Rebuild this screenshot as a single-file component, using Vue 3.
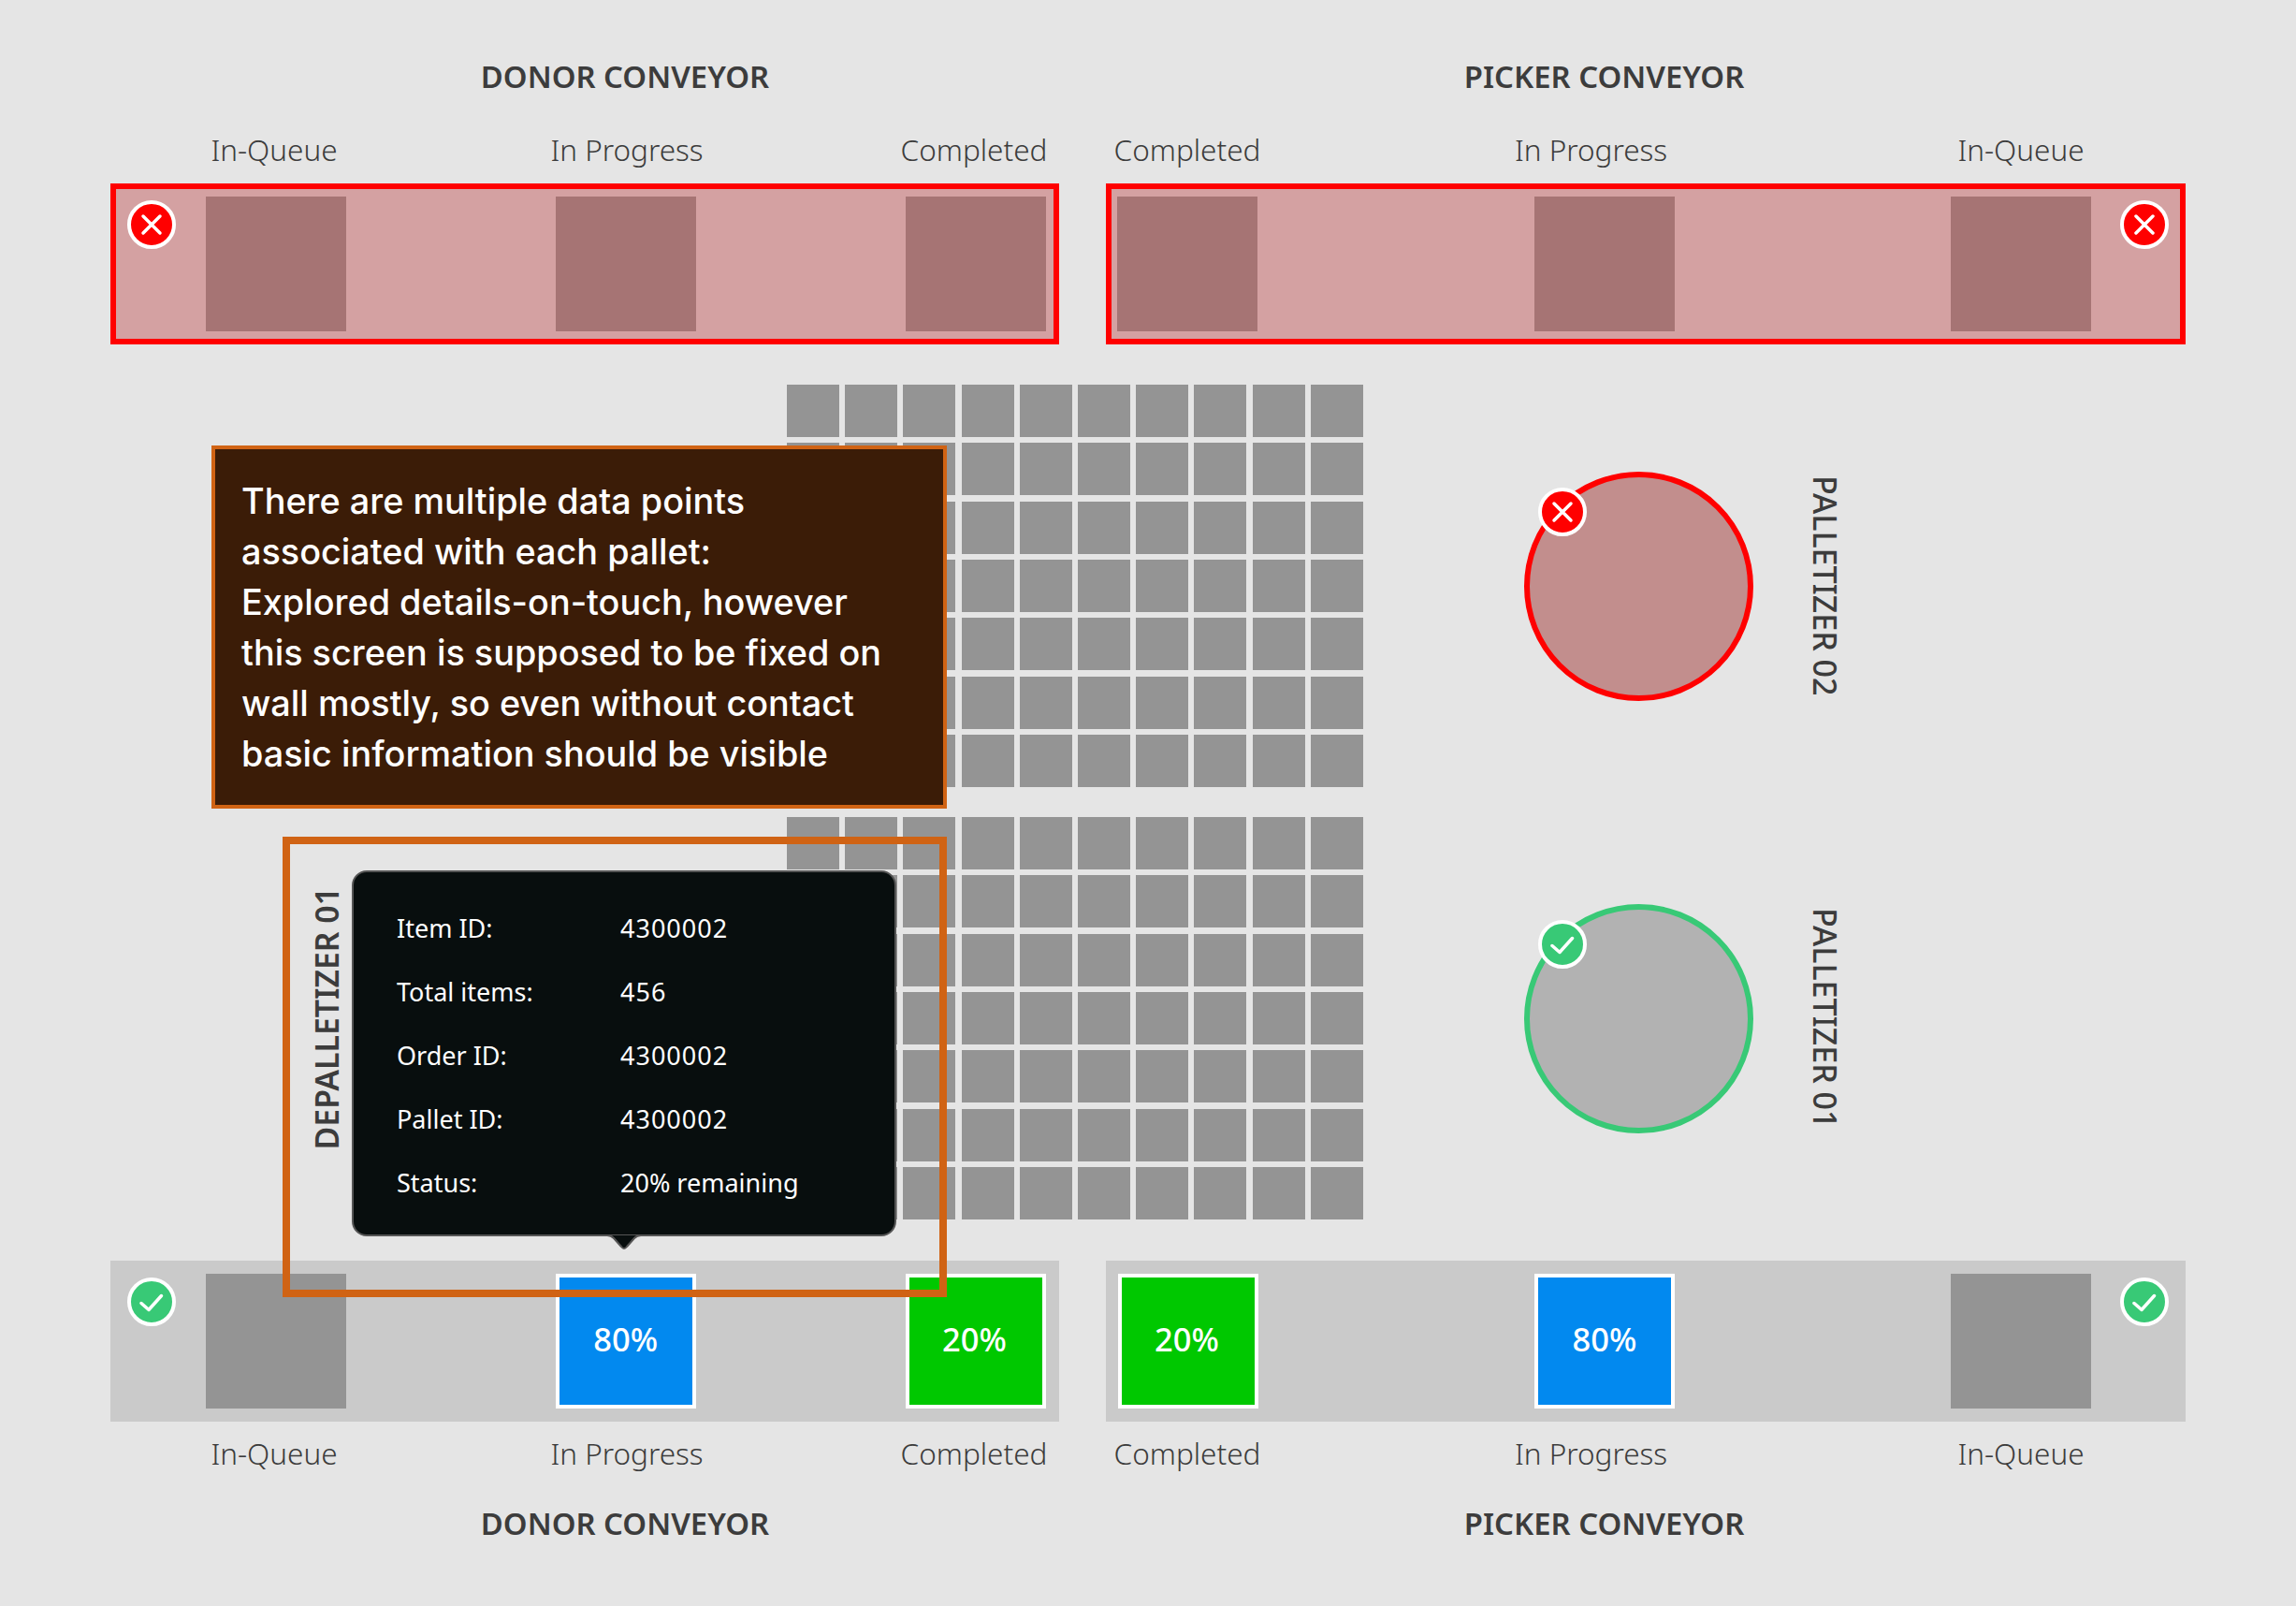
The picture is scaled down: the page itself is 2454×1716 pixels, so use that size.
<template>
  <div class="page">
    <div class="conveyors">
      <section v-for="c in topConveyors" :key="c.title" class="conveyor" :class="c.side">
        <h2 class="title">{{ c.title }}</h2>
        <div class="labels">
          <span v-for="s in c.slots" :key="s.label" class="label" :class="{ shifted: s.shifted }">{{ s.label }}</span>
        </div>
        <div class="bar error">
          <div v-for="s in c.slots" :key="s.label" class="slot"></div>
          <span class="badge bad">
            <svg viewBox="0 0 44 44"><path d="M13 13 L31 31 M31 13 L13 31" /></svg>
          </span>
        </div>
      </section>
    </div>

    <div class="floor">
      <div v-for="st in stations" :key="st.name" class="station">
        <div class="station-left">
          <span v-if="st.left" class="depal">{{ st.left }}</span>
        </div>
        <div class="cells">
          <i v-for="n in 70" :key="n" class="cell"></i>
        </div>
        <div class="pallet" :class="st.state">
          <span class="badge" :class="st.state === 'error' ? 'bad' : 'good'">
            <svg v-if="st.state === 'error'" viewBox="0 0 44 44"><path d="M13 13 L31 31 M31 13 L13 31" /></svg>
            <svg v-else viewBox="0 0 44 44"><path d="M11 23.5 L19 30.5 L32.5 15.5" /></svg>
          </span>
        </div>
        <span class="station-name">{{ st.name }}</span>
      </div>
    </div>

    <div class="conveyors">
      <section v-for="c in bottomConveyors" :key="c.title" class="conveyor" :class="c.side">
        <div class="bar ok">
          <div v-for="s in c.slots" :key="s.label" class="slot" :class="s.kind">{{ s.value }}</div>
          <span class="badge good">
            <svg viewBox="0 0 44 44"><path d="M11 23.5 L19 30.5 L32.5 15.5" /></svg>
          </span>
        </div>
        <div class="labels under">
          <span v-for="s in c.slots" :key="s.label" class="label" :class="{ shifted: s.shifted }">{{ s.label }}</span>
        </div>
        <h2 class="title under-title">{{ c.title }}</h2>
      </section>
    </div>

    <div class="note">
      There are multiple data points<br />
      associated with each pallet:<br />
      Explored details-on-touch, however<br />
      this screen is supposed to be fixed on<br />
      wall mostly, so even without contact<br />
      basic information should be visible
    </div>

    <div class="highlight"></div>

    <div class="tooltip">
      <template v-for="row in details" :key="row.key">
        <span>{{ row.key }}</span>
        <span :class="{ numeric: row.numeric }">{{ row.value }}</span>
      </template>
      <svg class="tip" viewBox="0 0 48 18">
        <path d="M0 2 H6 C10 2 11 3 13 5 L21 14 C23 16.5 25 16.5 27 14 L35 5 C37 3 38 2 42 2 H48" />
      </svg>
    </div>
  </div>
</template>

<script setup>
const donorTop = [{ label: 'In-Queue' }, { label: 'In Progress' }, { label: 'Completed' }]
const pickerTop = [{ label: 'Completed' }, { label: 'In Progress', shifted: true }, { label: 'In-Queue' }]

const topConveyors = [
  { title: 'DONOR CONVEYOR', side: 'donor', slots: donorTop },
  { title: 'PICKER CONVEYOR', side: 'picker', slots: pickerTop }
]

const bottomConveyors = [
  {
    title: 'DONOR CONVEYOR',
    side: 'donor',
    slots: [
      { label: 'In-Queue' },
      { label: 'In Progress', kind: 'blue', value: '80%' },
      { label: 'Completed', kind: 'green', value: '20%' }
    ]
  },
  {
    title: 'PICKER CONVEYOR',
    side: 'picker',
    slots: [
      { label: 'Completed', kind: 'green', value: '20%' },
      { label: 'In Progress', kind: 'blue', value: '80%', shifted: true },
      { label: 'In-Queue' }
    ]
  }
]

const stations = [
  { name: 'PALLETIZER 02', state: 'error' },
  { name: 'PALLETIZER 01', state: 'fine', left: 'DEPALLETIZER 01' }
]

const details = [
  { key: 'Item ID:', value: '4300002', numeric: true },
  { key: 'Total items:', value: '456', numeric: true },
  { key: 'Order ID:', value: '4300002', numeric: true },
  { key: 'Pallet ID:', value: '4300002', numeric: true },
  { key: 'Status:', value: '20% remaining' }
]
</script>

<style>
html,
body {
  margin: 0;
  background: #e5e5e5;
}
</style>

<style scoped>
.page {
  position: relative;
  box-sizing: border-box;
  width: 2454px;
  height: 1716px;
  padding: 0 118px;
  background: #e5e5e5;
  color: #3c3c3c;
  font-family: "Noto Sans", sans-serif;
  overflow: hidden;
}

.conveyors {
  display: grid;
  grid-template-columns: 1014px 1154px;
  column-gap: 50px;
}

.title {
  margin: 0;
  padding-top: 60px;
  height: 44px;
  line-height: 44px;
  font-size: 32.8px;
  font-weight: 600;
  text-align: center;
  box-sizing: content-box;
}

.donor .title {
  padding-left: 86px;
}

.picker .title {
  padding-right: 89px;
}

.labels {
  display: flex;
  justify-content: space-between;
  height: 44px;
  margin-top: 34px;
  line-height: 44px;
  font-size: 31.5px;
  font-weight: 300;
}

.labels.under {
  margin-top: 12px;
}

.under-title {
  padding-top: 31px;
}

.donor .labels {
  padding: 0 16px 0 100px;
}

.picker .labels {
  padding: 0 101px 0 12px;
}

.label {
  width: 150px;
  display: flex;
  justify-content: center;
  white-space: nowrap;
}

.donor .label:nth-child(2) {
  transform: translateX(3px);
}

.label.shifted {
  transform: translateX(-14px);
}

.bar {
  position: relative;
  box-sizing: border-box;
  display: flex;
  justify-content: space-between;
  height: 172px;
  margin-top: 13px;
  padding-top: 14px;
  padding-bottom: 14px;
}

.labels + .bar {
  margin-top: 14px;
}

.donor .bar {
  padding-left: 101.5px;
  padding-right: 14px;
}

.picker .bar {
  padding-left: 12px;
  padding-right: 101px;
}

.picker .bar.ok {
  padding-left: 13px;
}

.bar.ok {
  margin-top: 0;
  background: #cacaca;
}

.bar.error {
  background: #d4a1a2;
  box-shadow: inset 0 0 0 6px #ff0000;
}

.slot {
  box-sizing: border-box;
  width: 150px;
  padding-bottom: 5px;
  display: flex;
  align-items: center;
  justify-content: center;
  color: #fff;
  font-size: 34.5px;
  font-weight: 500;
}

.error .slot {
  background: #a67474;
}

.ok .slot {
  background: #949494;
}

.ok .slot.blue {
  background: #0289ef;
  border: 4px solid #fff;
}

.ok .slot.green {
  padding-right: 3px;
  background: #00c800;
  border: 4px solid #fff;
}

.badge {
  box-sizing: border-box;
  position: absolute;
  width: 52px;
  height: 52px;
  border: 4px solid #fff;
  border-radius: 50%;
}

.badge svg {
  display: block;
  width: 44px;
  height: 44px;
  fill: none;
  stroke: #fff;
  stroke-width: 3.5;
  stroke-linecap: round;
  stroke-linejoin: round;
}

.badge.bad {
  background: #ff0000;
}

.badge.good {
  background: #38c976;
}

.bar .badge {
  top: 18px;
}

.donor .bar .badge {
  left: 18px;
}

.picker .bar .badge {
  right: 18px;
}

.floor {
  display: flex;
  flex-direction: column;
  gap: 32px;
  padding: 43px 0 44px;
}

.station {
  display: flex;
  align-items: center;
  height: 430px;
}

.station-left {
  box-sizing: border-box;
  width: 723px;
  padding-left: 216px;
  flex: none;
}

.depal {
  display: block;
  writing-mode: vertical-rl;
  transform: rotate(180deg);
  font-size: 33.8px;
  font-weight: 600;
  line-height: 30px;
  white-space: nowrap;
}

.cells {
  display: grid;
  flex: none;
  grid-template-columns: repeat(10, 56px);
  grid-auto-rows: 56px;
  gap: 6.3px 6.2px;
}

.cell {
  display: block;
  background: #949494;
}

.pallet {
  position: relative;
  box-sizing: border-box;
  flex: none;
  width: 245px;
  height: 245px;
  margin-left: 172px;
  border: 6px solid;
  border-radius: 50%;
}

.pallet.error {
  background: #c28e8d;
  border-color: #ff0000;
}

.pallet.fine {
  background: #b2b2b2;
  border-color: #38c976;
}

.pallet .badge {
  top: 11px;
  left: 9px;
}

.station-name {
  margin-left: 62px;
  writing-mode: vertical-rl;
  font-size: 34px;
  font-weight: 500;
  line-height: 30px;
  white-space: nowrap;
}

.note {
  position: absolute;
  left: 226px;
  top: 476px;
  box-sizing: border-box;
  width: 786px;
  height: 388px;
  padding: 28px 28px;
  background: #3b1c07;
  border: 4px solid #d06314;
  color: #fff;
  font-family: Inter, sans-serif;
  font-size: 37.8px;
  font-weight: 500;
  line-height: 54px;
  white-space: nowrap;
}

.highlight {
  position: absolute;
  left: 302px;
  top: 894px;
  box-sizing: border-box;
  width: 710px;
  height: 492px;
  border: 8px solid #d06314;
}

.tooltip {
  position: absolute;
  left: 376px;
  top: 930px;
  box-sizing: border-box;
  display: grid;
  grid-template-columns: 239px 1fr;
  grid-auto-rows: 68px;
  align-items: center;
  width: 582px;
  height: 391px;
  padding: 25px 46px;
  background: #080e0e;
  border: 2px solid #555;
  border-radius: 16px;
  color: #fff;
  font-size: 27px;
}

.numeric {
  letter-spacing: 1px;
}

.tip {
  position: absolute;
  left: 265px;
  bottom: -17px;
  width: 48px;
  height: 18px;
  fill: #080e0e;
  stroke: #555;
  stroke-width: 2;
}
</style>
